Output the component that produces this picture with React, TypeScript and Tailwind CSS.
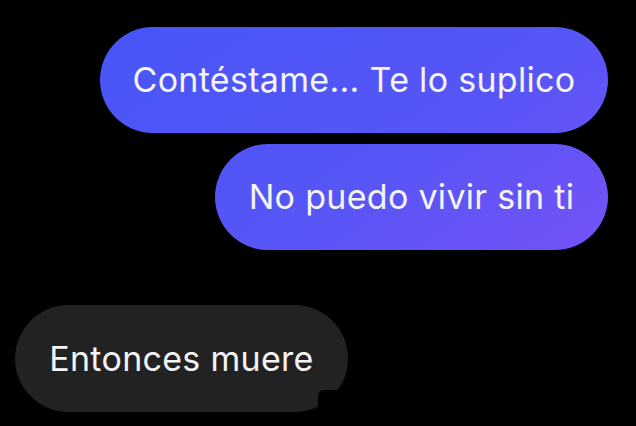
const sent = [
  { text: "Contéstame... Te lo suplico", width: "w-[508px]", gap: "mt-[27px]" },
  { text: "No puedo vivir sin ti", width: "w-[393px]", gap: "mt-[11px]" },
];

export default function App() {
  return (
    <div
      className="h-[426px] w-[636px] overflow-hidden bg-black text-[#f4f4f6] flex flex-col"
      style={{ fontFamily: "Inter, 'Noto Sans', sans-serif" }}
    >
      {sent.map((msg, i) => (
        <div
          key={i}
          className={`${msg.gap} ${msg.width} self-end mr-[28px] h-[106px] rounded-full flex items-center justify-center bg-fixed bg-linear-to-br from-[#4256f7] via-[#5755f6] to-[#8a4ef6]`}
        >
          <span className="text-[34px] tracking-[0.3px] leading-none">{msg.text}</span>
        </div>
      ))}

      <div className="relative mt-[55px] ml-[15px] w-[333px] h-[107px] rounded-full bg-[#222222] flex items-center justify-center">
        <span className="text-[34px] tracking-[0.3px] leading-none">Entonces muere</span>
        <div className="absolute right-[-2px] bottom-[-2px] w-[32px] h-[24px] rounded-tl-[6px] bg-black" />
      </div>
    </div>
  );
}
